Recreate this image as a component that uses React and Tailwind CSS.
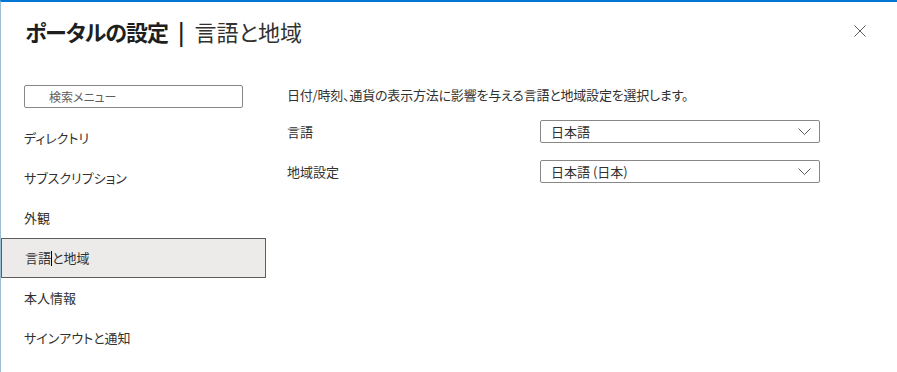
import React from 'react';

const navItems = [
  { id: 'directory', label: 'ディレクトリ' },
  { id: 'subscription', label: 'サブスクリプション' },
  { id: 'appearance', label: '外観' },
  { id: 'language', label: '言語と地域' },
  { id: 'profile', label: '本人情報' },
  { id: 'signout', label: 'サインアウトと通知' },
];

const Chevron = () => (
  <svg className="w-[13px] h-[8px] text-[#605e5c]" viewBox="0 0 13 8" fill="none" stroke="currentColor">
    <path d="M0.5 0.5L6.5 6.5L12.5 0.5" strokeWidth={1} />
  </svg>
);

const Select = ({ value }) => (
  <div className="w-[280px] h-[23px] border border-[#8a8886] rounded-[2px] flex items-center justify-between pl-[10px] pr-[8px] bg-white">
    <span className="text-[13px] text-[#323130]">{value}</span>
    <Chevron />
  </div>
);

const App = () => {
  const current = 'language';

  return (
    <div
      className="w-[897px] h-[372px] bg-white border-t-2 border-t-[#0078d4] border-l border-l-[#9bbfd9] text-[#323130] font-['Noto_Sans_CJK_JP','Noto_Sans',sans-serif] [font-feature-settings:'palt'] overflow-hidden"
    >
      <div className="flex items-center justify-between h-[60px] pl-[24px] pr-[31px] pb-[2px]">
        <h1 className="flex items-center text-[22px] leading-none text-[#201f1e]">
          <span className="font-bold tracking-[-1px]">ポータルの設定</span>
          <span className="mx-[10px] font-semibold">|</span>
          <span className="font-normal text-[#323130]">言語と地域</span>
        </h1>
        <svg className="w-[12px] h-[12px] text-[#605e5c]" viewBox="0 0 12 12" stroke="currentColor" fill="none">
          <path d="M0.5 0.5L11.5 11.5M11.5 0.5L0.5 11.5" strokeWidth={1} />
        </svg>
      </div>

      <div className="flex">
        <div className="w-[265px] shrink-0">
          <div className="ml-[23px] mt-[23px] w-[219px] h-[23px] border border-[#8a8886] rounded-[2px] flex items-center pl-[24px]">
            <span className="text-[12px] text-[#605e5c]">検索メニュー</span>
          </div>
          <nav className="mt-[10px]">
            {navItems.map((item) => {
              const active = item.id === current;
              return (
                <div
                  key={item.id}
                  className={`h-[40px] flex items-center text-[13px] pl-[23px] ${
                    active ? 'bg-[#edebe9] border border-[#605e5c]' : ''
                  }`}
                >
                  {active ? (
                    <span className="flex items-center">
                      言語
                      <span className="inline-block w-px h-[15px] bg-black" />
                      と地域
                    </span>
                  ) : (
                    item.label
                  )}
                </div>
              );
            })}
          </nav>
        </div>

        <div className="pl-[21px] pt-[24px]">
          <p className="text-[13px] leading-[18px] tracking-[-0.2px]">
            日付/時刻、通貨の表示方法に影響を与える言語と地域設定を選択します。
          </p>
          <div className="mt-[16px] flex flex-col gap-[17px]">
            <div className="flex items-center">
              <span className="w-[253px] text-[13px]">言語</span>
              <Select value="日本語" />
            </div>
            <div className="flex items-center">
              <span className="w-[253px] text-[13px]">地域設定</span>
              <Select value="日本語 (日本)" />
            </div>
          </div>
        </div>
      </div>
    </div>
  );
};

export default App;
